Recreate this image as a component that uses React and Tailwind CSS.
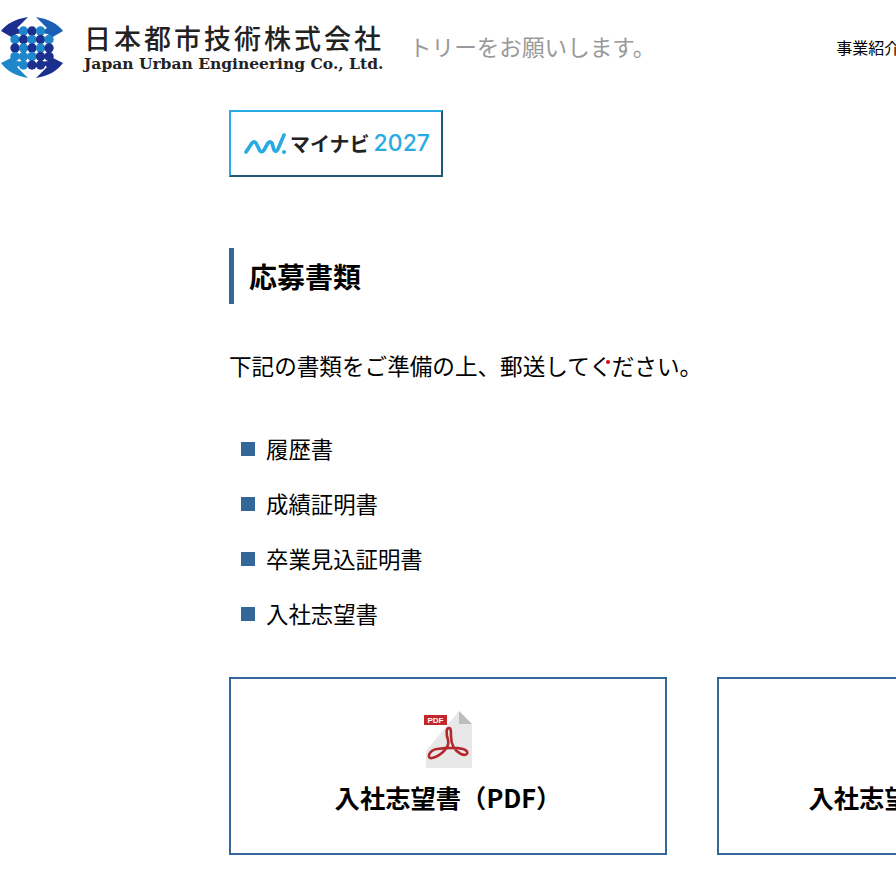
import React from "react";

const docs = ["履歴書", "成績証明書", "卒業見込証明書", "入社志望書"];
const cards = ["入社志望書（PDF）", "入社志望書（WORD）"];

const NAVY = "#1b2f8f";
const BLUE = "#1d87c9";

// net of blobs in the logo, white gaps are left between them
const dots = [];
for (let r = 0; r < 5; r++) {
  for (let c = 0; c < 5; c++) {
    if ((r === 0 || r === 4) && (c === 0 || c === 4)) continue;
    let fill = (r + c) % 2 === 0 ? NAVY : BLUE;
    if (r > 2 && c < 2) fill = BLUE;
    if (r > 2 && c > 2) fill = NAVY;
    dots.push({ x: 15 + c * 8.5, y: 15 + r * 8.5, fill });
  }
}

function LogoMark() {
  return (
    <svg width="64" height="64" viewBox="0 0 64 64" className="shrink-0">
      <path d="M1 15 C6 8 15 3 28 1 L17 12 L24 17 L16 18 L13 22 Z" fill={NAVY} />
      <path d="M63 15 C58 8 49 3 36 1 L47 12 L40 17 L48 18 L51 22 Z" fill="#1a5fb4" />
      <path d="M1 47 C6 54 15 60 28 62 L17 51 L24 46 L16 45 L13 41 Z" fill={BLUE} />
      <path d="M63 47 C58 54 49 60 36 62 L47 51 L40 46 L48 45 L51 41 Z" fill={NAVY} />
      {dots.map((d) => (
        <circle key={`${d.x}-${d.y}`} cx={d.x} cy={d.y} r="4.7" fill={d.fill} />
      ))}
    </svg>
  );
}

function PdfIcon() {
  return (
    <svg width="50" height="58" viewBox="0 0 50 58" className="block">
      <path d="M3 0 H36 L49 13 V57 H3 Z" fill="#e8e8e8" />
      <path d="M3 0 H36 L3 40 Z" fill="#ffffff" />
      <path d="M36 0 L49 13 H36 Z" fill="#bdbdbd" />
      <path
        d="M26 17 C23 17 23 23 25 29 C27 36 18 45 9 47 C3 48 6 39 14 38 C22 37 32 36 40 38 C47 40 45 46 38 43 C32 40 28 34 28 25 C28 20 28 17 26 17 Z"
        fill="none"
        stroke="#b3282d"
        strokeWidth="2.6"
      />
      <rect x="1" y="4" width="23" height="10" fill="#c1272d" />
      <text x="12.5" y="12" textAnchor="middle" fill="#ffffff" fontSize="8" fontWeight="700" fontFamily="Liberation Sans, sans-serif">PDF</text>
    </svg>
  );
}

export default function App() {
  return (
    <div className="relative h-[896px] w-[896px] overflow-hidden bg-white font-['Noto_Sans_CJK_JP','Noto_Sans',sans-serif] text-black">
      <header className="flex h-[96px] items-center">
        <div className="flex w-[384px] shrink-0 items-center">
          <LogoMark />
          <div className="ml-[20px] flex flex-col text-[#222]">
            <span className="whitespace-nowrap text-[27px] font-medium leading-[30px] tracking-[3px]">日本都市技術株式会社</span>
            <span className="mt-[1px] whitespace-nowrap font-['DejaVu_Serif',serif] text-[15.5px] font-bold leading-[20px]">Japan Urban Engineering Co., Ltd.</span>
          </div>
        </div>
        <p className="ml-[25px] -translate-y-[1px] whitespace-nowrap text-[22.6px] text-[#999]">トリーをお願いします。</p>
        <span className="ml-[181px] -translate-y-[1px] whitespace-nowrap text-[16px]">事業紹介</span>
      </header>

      <main className="ml-[229px] pt-[14px]">
        <div className="flex h-[67px] w-[214px] items-center border-2 border-[#29abe2] border-b-[#1f5a75] border-r-[#1f5a75] pl-[12px]">
          <svg width="44" height="24" viewBox="0 0 44 24" className="shrink-0">
            <path d="M3 20 L9 11 Q11 9 13 11 L17 19 Q19 21 21 18 L25 11 Q27 9 29 11 L31 18 Q33 21 35 17 L41 3" fill="none" stroke="#29abe2" strokeWidth="3.6" strokeLinecap="round" strokeLinejoin="round" />
            <circle cx="41" cy="20" r="2" fill="#29abe2" />
          </svg>
          <span className="ml-[3px] whitespace-nowrap text-[20px] font-bold leading-none text-[#222]">マイナビ</span>
          <span className="ml-[4px] whitespace-nowrap font-['Inter',sans-serif] text-[23px] font-medium leading-none text-[#29abe2]">2027</span>
        </div>

        <h2 className="mt-[71px] flex h-[56px] items-center border-l-[5px] border-[#336699] pl-[15px] text-[28px] font-bold">
          応募書類
        </h2>

        <p className="relative mt-[44px] whitespace-nowrap text-[22.6px] leading-[36px]">
          下記の書類をご準備の上、郵送してください。
          <span className="absolute left-[377px] top-[12px] size-[4px] rounded-full bg-[#e60012]" />
        </p>

        <ul className="mt-[46px] flex flex-col gap-[17px] pl-[12px]">
          {docs.map((d) => (
            <li key={d} className="flex h-[38px] items-center gap-[11px] text-[22.4px]">
              <span className="mt-[-1px] size-[14px] shrink-0 bg-[#336699]" />
              {d}
            </li>
          ))}
        </ul>

        <div className="mt-[44px] flex gap-[50px]">
          {cards.map((c) => (
            <div key={c} className="flex h-[178px] w-[438px] shrink-0 flex-col items-center border-2 border-[#336699] pt-[32px]">
              <PdfIcon />
              <span className="mt-[10px] whitespace-nowrap text-[25.3px] font-bold leading-[36px]">{c}</span>
            </div>
          ))}
        </div>
      </main>
    </div>
  );
}
